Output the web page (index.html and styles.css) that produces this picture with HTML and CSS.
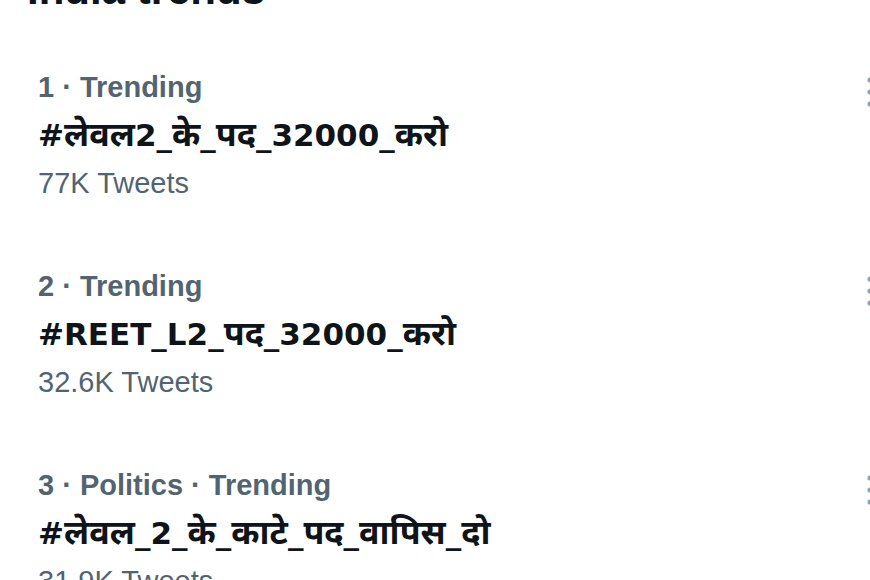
FILE: index.html
```html
<!DOCTYPE html>
<html lang="hi">
<head>
<meta charset="utf-8">
<link rel="stylesheet" href="styles.css">
</head>
<body>
<main class="page">
  <h2 class="title">India trends</h2>
  <ul class="trends">
    <li class="trend">
      <div class="trend-text">
        <div class="meta">1 · Trending</div>
        <div class="tag">#<span class="dev">लेवल</span>2_<span class="dev">के</span>_<span class="dev">पद</span>_32000_<span class="dev">करो</span></div>
        <div class="count">77K Tweets</div>
      </div>
      <svg class="more" viewBox="0 0 6 30" width="6" height="30"><circle cx="3" cy="3" r="2.6"/><circle cx="3" cy="15" r="2.6"/><circle cx="3" cy="27" r="2.6"/></svg>
    </li>
    <li class="trend">
      <div class="trend-text">
        <div class="meta">2 · Trending</div>
        <div class="tag">#REET_L2_<span class="dev">पद</span>_32000_<span class="dev">करो</span></div>
        <div class="count">32.6K Tweets</div>
      </div>
      <svg class="more" viewBox="0 0 6 30" width="6" height="30"><circle cx="3" cy="3" r="2.6"/><circle cx="3" cy="15" r="2.6"/><circle cx="3" cy="27" r="2.6"/></svg>
    </li>
    <li class="trend">
      <div class="trend-text">
        <div class="meta">3 · Politics · Trending</div>
        <div class="tag">#<span class="dev">लेवल</span>_2_<span class="dev">के</span>_<span class="dev">काटे</span>_<span class="dev">पद</span>_<span class="dev">वापिस</span>_<span class="dev">दो</span></div>
        <div class="count">31.9K Tweets</div>
      </div>
      <svg class="more" viewBox="0 0 6 30" width="6" height="30"><circle cx="3" cy="3" r="2.6"/><circle cx="3" cy="15" r="2.6"/><circle cx="3" cy="27" r="2.6"/></svg>
    </li>
  </ul>
</main>
</body>
</html>
```
FILE: styles.css
```css
html, body {
  margin: 0;
  padding: 0;
  background: #ffffff;
  overflow: hidden;
}
body {
  width: 870px;
  height: 580px;
  font-family: "Liberation Sans", "Noto Sans Devanagari", "Noto Sans", sans-serif;
}
.page {
  padding-left: 27px;
}
.title {
  margin: -35px 0 0 0;
  font-size: 42px;
  line-height: 50px;
  font-weight: 700;
  color: #0f1419;
}
.trends {
  list-style: none;
  margin: 0;
  padding: 0 0 0 11px;
  display: flex;
  flex-direction: column;
  gap: 55px;
  margin-top: 48px;
}
.trend {
  display: flex;
  justify-content: space-between;
  align-items: flex-start;
}
.meta, .count {
  font-size: 29px;
  line-height: 48px;
  color: #536471;
}
.meta {
  font-weight: 700;
}
.tag {
  font-family: "DejaVu Sans", "Noto Sans Devanagari", "Noto Sans", sans-serif;
  font-size: 31px;
  line-height: 48px;
  height: 48px;
  font-weight: 700;
  color: #0f1419;
  white-space: nowrap;
}
.dev {
  font-size: 1.1em;
  line-height: 1;
}
.more {
  fill: #98a4ae;
  margin-top: 14px;
  margin-right: -3px;
  flex: none;
}
```
